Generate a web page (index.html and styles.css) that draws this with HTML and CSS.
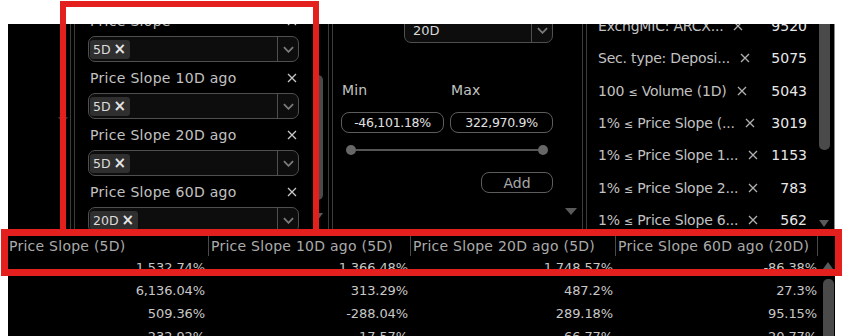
FILE: index.html
```html
<!DOCTYPE html>
<html>
<head>
<meta charset="utf-8">
<link rel="stylesheet" href="styles.css">
</head>
<body>
<div class="app">
  <div class="top">
    <div class="gutter"><span class="tri dim"></span></div>
    <div class="sep"></div>
    <div class="filters">
      <div class="flist">
        <div class="fitem">
          <div class="flabel"><span>Price Slope</span><svg class="xi" viewBox="0 0 10 10"><path d="M1 1L9 9M9 1L1 9"/></svg></div>
          <div class="select"><div class="chips"><span class="chip">5D <b>×</b></span></div><div class="caret"><svg viewBox="0 0 12 7"><path d="M1 1L6 6L11 1"/></svg></div></div>
        </div>
        <div class="fitem">
          <div class="flabel"><span>Price Slope 10D ago</span><svg class="xi" viewBox="0 0 10 10"><path d="M1 1L9 9M9 1L1 9"/></svg></div>
          <div class="select"><div class="chips"><span class="chip">5D <b>×</b></span></div><div class="caret"><svg viewBox="0 0 12 7"><path d="M1 1L6 6L11 1"/></svg></div></div>
        </div>
        <div class="fitem">
          <div class="flabel"><span>Price Slope 20D ago</span><svg class="xi" viewBox="0 0 10 10"><path d="M1 1L9 9M9 1L1 9"/></svg></div>
          <div class="select"><div class="chips"><span class="chip">5D <b>×</b></span></div><div class="caret"><svg viewBox="0 0 12 7"><path d="M1 1L6 6L11 1"/></svg></div></div>
        </div>
        <div class="fitem">
          <div class="flabel"><span>Price Slope 60D ago</span><svg class="xi" viewBox="0 0 10 10"><path d="M1 1L9 9M9 1L1 9"/></svg></div>
          <div class="select"><div class="chips"><span class="chip">20D <b>×</b></span></div><div class="caret"><svg viewBox="0 0 12 7"><path d="M1 1L6 6L11 1"/></svg></div></div>
        </div>
      </div>
      <div class="vscroll fs"><div class="thumb"></div><span class="tri"></span></div>
    </div>
    <div class="sep"></div>
    <div class="range">
      <div class="rcontent">
        <div class="select period"><div class="chips"><span class="plain">20D</span></div><div class="caret"><svg viewBox="0 0 12 7"><path d="M1 1L6 6L11 1"/></svg></div></div>
        <div class="mm">
          <span class="mmlabel">Min</span><span class="mmlabel">Max</span>
          <span class="inp">-46,101.18%</span><span class="inp">322,970.9%</span>
        </div>
        <div class="slider"><span class="knob"></span><span class="track"></span><span class="knob"></span></div>
        <div class="addrow"><span class="btn">Add</span></div>
      </div>
      <div class="vscroll rs"><span class="tri"></span></div>
    </div>
    <div class="sep"></div>
    <div class="applied">
      <div class="alist">
        <div class="arow"><span class="alabel">ExchgMIC: ARCX...</span><svg class="xi" viewBox="0 0 10 10"><path d="M1 1L9 9M9 1L1 9"/></svg><span class="cnt">9520</span></div>
        <div class="arow"><span class="alabel">Sec. type: Deposi...</span><svg class="xi" viewBox="0 0 10 10"><path d="M1 1L9 9M9 1L1 9"/></svg><span class="cnt">5075</span></div>
        <div class="arow"><span class="alabel">100 <span class="le">≤</span> Volume (1D)</span><svg class="xi" viewBox="0 0 10 10"><path d="M1 1L9 9M9 1L1 9"/></svg><span class="cnt">5043</span></div>
        <div class="arow"><span class="alabel">1% <span class="le">≤</span> Price Slope (...</span><svg class="xi" viewBox="0 0 10 10"><path d="M1 1L9 9M9 1L1 9"/></svg><span class="cnt">3019</span></div>
        <div class="arow"><span class="alabel">1% <span class="le">≤</span> Price Slope 1...</span><svg class="xi" viewBox="0 0 10 10"><path d="M1 1L9 9M9 1L1 9"/></svg><span class="cnt">1153</span></div>
        <div class="arow"><span class="alabel">1% <span class="le">≤</span> Price Slope 2...</span><svg class="xi" viewBox="0 0 10 10"><path d="M1 1L9 9M9 1L1 9"/></svg><span class="cnt">783</span></div>
        <div class="arow"><span class="alabel">1% <span class="le">≤</span> Price Slope 6...</span><svg class="xi" viewBox="0 0 10 10"><path d="M1 1L9 9M9 1L1 9"/></svg><span class="cnt">562</span></div>
      </div>
      <div class="vscroll as"><div class="thumb"></div><span class="tri"></span></div>
    </div>
  </div>
  <div class="table">
    <div class="grid">
      <div class="hrow">
        <div class="hc c1">Price Slope (5D)</div>
        <div class="hc c2">Price Slope 10D ago (5D)</div>
        <div class="hc c3">Price Slope 20D ago (5D)</div>
        <div class="hc c4">Price Slope 60D ago (20D)</div>
      </div>
      <div class="drow"><div class="dc c1">1,532.74%</div><div class="dc c2">1,366.48%</div><div class="dc c3">1,748.57%</div><div class="dc c4">-86.38%</div></div>
      <div class="drow"><div class="dc c1">6,136.04%</div><div class="dc c2">313.29%</div><div class="dc c3">487.2%</div><div class="dc c4">27.3%</div></div>
      <div class="drow"><div class="dc c1">509.36%</div><div class="dc c2">-288.04%</div><div class="dc c3">289.18%</div><div class="dc c4">95.15%</div></div>
      <div class="drow"><div class="dc c1">232.92%</div><div class="dc c2">17.57%</div><div class="dc c3">66.77%</div><div class="dc c4">20.77%</div></div>
    </div>
    <div class="tscroll"><span class="tri up"></span><div class="thumb"></div></div>
  </div>
</div>
<div class="mark mark1"></div>
<div class="mark mark2"></div>
</body>
</html>
```

FILE: styles.css
```css
* { box-sizing: border-box; }
html, body { margin: 0; padding: 0; background: #fff; }
body { width: 845px; height: 336px; overflow: hidden; position: relative; font-family: "DejaVu Sans", sans-serif; }

.app {
  margin: 24px 10px 0 8px;
  height: 312px;
  background: #000;
  display: flex;
  flex-direction: column;
  overflow: hidden;
}

.top { height: 212px; display: flex; flex-shrink: 0; overflow: hidden; }

.gutter { width: 62px; padding: 93px 0 0 50px; }

.sep { width: 5px; border-left: 1px solid #3c3c3c; border-right: 1px solid #3c3c3c; flex-shrink: 0; }

.tri { display: block; width: 0; height: 0; border-left: 5px solid transparent; border-right: 5px solid transparent; border-top: 7px solid #5a5a5a; }
.tri.dim { border-top-color: #3a3a3a; }
.tri.up { border-top: 0; border-bottom: 7px solid #5a5a5a; }

/* filters */
.filters { width: 253px; display: flex; }
.flist { width: 238px; padding-left: 13px; margin-top: -19px; }
.fitem { width: 211px; }
.flabel { height: 31px; display: flex; align-items: center; justify-content: space-between; padding: 0 2px 0 2px; color: #c2c2c2; font-size: 14px; letter-spacing: 0.3px; }
.xi { width: 10px; height: 10px; fill: none; stroke: #c8c8c8; stroke-width: 1.3; flex-shrink: 0; }
.select { height: 26px; border: 1px solid #4f4f4f; border-radius: 7px; background: #0d0d0d; display: flex; }
.chips { flex: 1; display: flex; align-items: center; padding-left: 1px; }
.chip { height: 19px; background: #2f2f2f; border-radius: 3px; padding: 0 4px 0 3px; display: flex; align-items: center; gap: 3px; color: #dcdcdc; font-size: 12.5px; }
.chip b { font-size: 15px; color: #e6e6e6; line-height: 1; }
.caret { width: 21px; border-left: 1px solid #4f4f4f; display: flex; align-items: center; justify-content: center; }
.caret svg { width: 11px; height: 7px; fill: none; stroke: #7a7a7a; stroke-width: 2; }

.vscroll { width: 10px; flex-shrink: 0; }
.vscroll .thumb { background: #4a4a4a; border-radius: 5px; }
.fs .thumb { margin-top: 51px; height: 125px; }
.fs .tri { margin-top: 13px; }

/* range */
.range { width: 249px; display: flex; padding-left: 8px; }
.rcontent { width: 212px; display: flex; flex-direction: column; }
.period { width: 149px; height: 25px; margin-top: -6px; align-self: flex-end; }
.plain { padding-left: 7px; color: #d8d8d8; font-size: 13px; }
.mm { display: grid; grid-template-columns: 103px 103px; column-gap: 6px; margin-top: 37px; }
.mmlabel { height: 20px; display: flex; align-items: center; padding-left: 1px; color: #c2c2c2; font-size: 14px; letter-spacing: 0.2px; }
.inp { margin-top: 12px; height: 21px; border: 1px solid #5c5c5c; border-radius: 8px; display: flex; align-items: center; justify-content: center; color: #e0e0e0; font-size: 12.5px; letter-spacing: -0.3px; }
.slider { margin-top: 12px; height: 10px; display: flex; align-items: center; padding: 0 5px 0 5px; }
.knob { width: 10px; height: 10px; border-radius: 50%; background: #676767; flex-shrink: 0; }
.track { flex: 1; height: 2px; background: #555; }
.addrow { margin-top: 17px; display: flex; justify-content: flex-end; }
.btn { width: 72px; height: 21px; border: 1px solid #5c5c5c; border-radius: 8px; display: flex; align-items: center; justify-content: center; color: #a8a8a8; font-size: 14px; }
.rs { width: 12px; margin-left: 12px; padding-top: 184px; }
.rs .tri { border-left-width: 6px; border-right-width: 6px; }

/* applied */
.applied { width: 248px; display: flex; border-right: 1px solid #8a8a8a; }
.alist { width: 232px; padding: 0 12px 0 11px; margin-top: -14px; }
.arow { height: 32.3px; display: flex; align-items: center; color: #c2c2c2; font-size: 14px; letter-spacing: -0.2px; white-space: nowrap; }
.le { font-size: 11px; }
.arow .xi { margin-left: 10px; stroke: #b0b0b0; }
.cnt { margin-left: auto; color: #e8e8e8; letter-spacing: 0; }
.as { width: 11px; }
.as .thumb { height: 126px; border-radius: 0 0 5px 5px; }
.as .tri { margin-top: 70px; margin-left: 0; border-left-width: 5.5px; border-right-width: 5.5px; }

/* table */
.table { flex: 1; display: flex; overflow: hidden; }
.grid { width: 812px; }
.hrow, .drow { display: grid; grid-template-columns: 200px 202px 205px 203px; }
.hrow { height: 20px; }
.hc { display: flex; align-items: center; color: #ababab; font-size: 14px; letter-spacing: 0.25px; white-space: nowrap; padding-left: 1px; }
.hc.c2, .hc.c3, .hc.c4 { padding-left: 3px; }
.hc.c2, .hc.c3, .hc.c4 { box-shadow: inset 1px 0 0 #4a4a4a; }
.hc.c4 { border-right: 1px solid #4a4a4a; }
.drow { height: 23px; }
.dc { display: flex; align-items: center; justify-content: flex-end; padding-right: 3px; color: #c8c8c8; font-size: 13px; letter-spacing: -0.1px; }
.dc.c2, .dc.c3 { padding-right: 2px; }
.dc.c4 { padding-right: 1px; }
.tscroll { width: 11px; margin-left: 3px; padding-top: 26px; }
.tscroll .tri { border-left-width: 5.5px; border-right-width: 5.5px; }
.tscroll .thumb { margin-top: 10px; height: 80px; background: #4a4a4a; border-radius: 5px; }

/* annotation marks */
.mark { position: absolute; border-style: solid; border-color: #e3201e; pointer-events: none; }
.mark1 { left: 60px; top: 1px; width: 259px; height: 234px; border-width: 6px; }
.mark2 { left: 1px; top: 229px; width: 841px; height: 47px; border-width: 7px; }
```
